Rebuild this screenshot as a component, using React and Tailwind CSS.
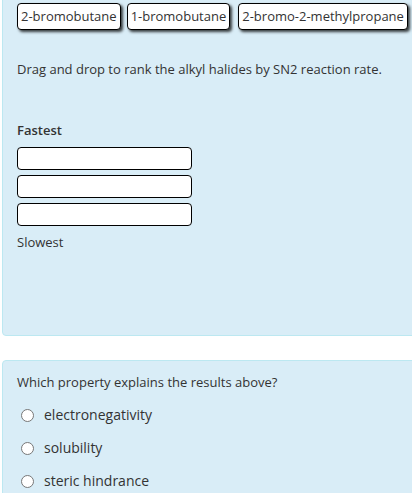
export default function App() {
  const font = { fontFamily: '"Open Sans", "Noto Sans", sans-serif' };
  const chips = ["2-bromobutane", "1-bromobutane", "2-bromo-2-methylpropane"];
  const opts = ["electronegativity", "solubility", "steric hindrance"];
  return (
    <div className="w-[412px] h-[493px] overflow-hidden bg-white text-[#333] text-[13px]" style={font}>
      <div className="w-[440px] pl-[2px]">
        <div className="mt-[-13px] h-[349px] rounded-[4px] border border-[#bce8f1] bg-[#d9edf7] px-[14px] pt-[15px]">
          <div className="flex gap-[6px]">
            {chips.map((c, i) => (
              <div
                key={c}
                className={`h-[27px] rounded-[4px] border border-black bg-white px-[3px] leading-[25px] whitespace-nowrap shadow-[2px_2px_3px_rgba(0,0,0,0.75)] ${i === 2 ? "ml-[2px]" : ""}`}
              >
                {c}
              </div>
            ))}
          </div>
          <p className="mt-[30px] leading-[18px]">Drag and drop to rank the alkyl halides by SN2 reaction rate.</p>
          <p className="mt-[43px] font-semibold leading-[18px]">Fastest</p>
          <div className="mt-[8px] flex flex-col gap-[5px]">
            <div className="h-[23px] w-[175px] rounded-[4px] border border-black bg-white" />
            <div className="h-[23px] w-[175px] rounded-[4px] border border-black bg-white" />
            <div className="h-[23px] w-[175px] rounded-[4px] border border-black bg-white" />
          </div>
          <p className="mt-[7px] leading-[18px]">Slowest</p>
        </div>
        <div className="mt-[24px] h-[200px] rounded-[4px] border border-[#bce8f1] bg-[#d9edf7] px-[14px] pt-[12px]">
          <p className="leading-[18px]">Which property explains the results above?</p>
          <div className="mt-[15px] flex flex-col gap-[15px]">
            {opts.map((o) => (
              <label key={o} className="flex items-center gap-[10px] pl-[4px] text-[14px] leading-[18px]">
                <span className="inline-block h-[13px] w-[13px] rounded-full border border-[#777] bg-white" />
                {o}
              </label>
            ))}
          </div>
        </div>
      </div>
    </div>
  );
}
